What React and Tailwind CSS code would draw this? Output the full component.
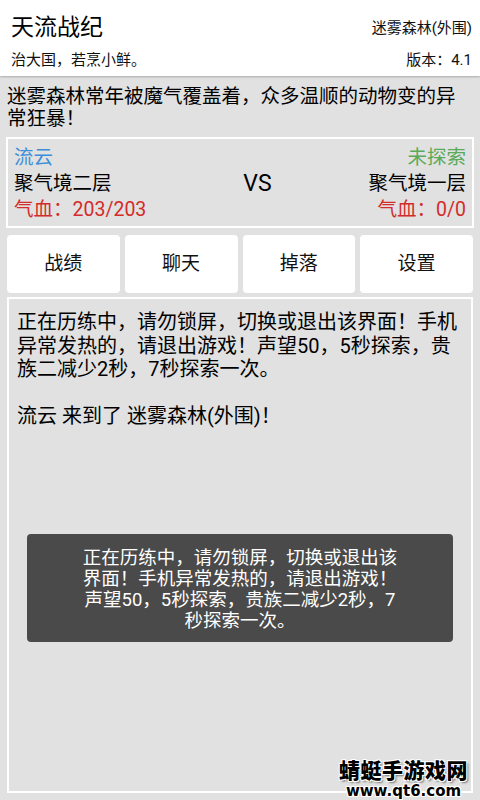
import React from "react";

// Game exploration screen – header, battle panel, tabs, log with toast

const FONT = "font-['Roboto','Noto_Sans_CJK_SC',sans-serif]";

function TabButton({ label }) {
  return (
    <button className="flex h-[58px] flex-1 items-center justify-center rounded-[4px] bg-white text-[19px] text-[#111]">
      {label}
    </button>
  );
}

export default function App() {
  const tabs = ["战绩", "聊天", "掉落", "设置"];

  return (
    <div className={`relative flex h-[800px] w-[480px] flex-col overflow-hidden bg-[#e1e1e1] ${FONT}`}>
      {/* Header */}
      <div className="bg-white px-[11px] pb-[3px] pt-[9px] shadow-[0_1px_2px_rgba(0,0,0,0.25)]">
        <div className="flex items-center justify-between">
          <span className="text-[23px] leading-[38px] text-[#000]">天流战纪</span>
          <span className="mr-[-3px] text-[15px] leading-[38px] text-[#111]">迷雾森林(外围)</span>
        </div>
        <div className="flex items-center justify-between">
          <span className="text-[15px] leading-[26px] text-[#111]">治大国，若烹小鲜。</span>
          <span className="mr-[-3px] text-[15px] leading-[26px] text-[#111]">版本：4.1</span>
        </div>
      </div>

      {/* Description */}
      <p className="px-[7px] pt-[10px] text-[19.5px] leading-[22px] text-[#000]">
        迷雾森林常年被魔气覆盖着，众多温顺的动物变的异常狂暴！
      </p>

      {/* Battle panel */}
      <div className="mx-[6px] mt-[7px] flex items-center justify-between border-2 border-white px-[6px] pb-[3px] pt-[6px]">
        <div className="flex flex-col">
          <span className="text-[19.5px] leading-[26px] text-[#3d8fd8]">流云</span>
          <span className="text-[19.5px] leading-[26px] text-[#000]">聚气境二层</span>
          <span className="text-[19.5px] leading-[26px] text-[#d42b2b]">气血：203/203</span>
        </div>
        <span className="text-[23px] text-[#000]">VS</span>
        <div className="flex flex-col items-end">
          <span className="text-[19.5px] leading-[26px] text-[#5aaa5a]">未探索</span>
          <span className="text-[19.5px] leading-[26px] text-[#000]">聚气境一层</span>
          <span className="text-[19.5px] leading-[26px] text-[#d42b2b]">气血：0/0</span>
        </div>
      </div>

      {/* Tabs */}
      <div className="mx-[7px] mt-[7px] flex gap-[5px]">
        {tabs.map((t) => (
          <TabButton key={t} label={t} />
        ))}
      </div>

      {/* Log panel */}
      <div className="relative mx-[7px] mb-[7px] mt-[4px] flex-1 border-2 border-white pb-[12px] pl-[8px] pr-[12px] pt-[12px]">
        <p className="text-[20px] leading-[23.5px] text-[#000]">
          正在历练中，请勿锁屏，切换或退出该界面！手机异常发热的，请退出游戏！声望50，5秒探索，贵族二减少2秒，7秒探索一次。
        </p>
        <p className="mt-[23.5px] text-[20px] leading-[23.5px] text-[#000]">流云 来到了 迷雾森林(外围)！</p>

        {/* Toast */}
        <div className="absolute left-[18px] right-[18px] top-[235px] flex justify-center rounded-[4px] bg-[#4a4a4a] pb-[10px] pt-[14px]">
          <p className="text-center text-[18.5px] leading-[21px] text-white">
            正在历练中，请勿锁屏，切换或退出该
            <br />
            界面！手机异常发热的，请退出游戏！
            <br />
            声望50，5秒探索，贵族二减少2秒，7
            <br />
            秒探索一次。
          </p>
        </div>
      </div>

      {/* Watermark */}
      <div className="absolute bottom-[1px] right-[12px] flex flex-col items-center">
        <span className="text-[21px] font-black leading-[24px] tracking-[0.5px] text-black [text-shadow:1px_1px_0_#fff,-1px_-1px_0_#fff,1px_-1px_0_#fff,-1px_1px_0_#fff,2px_2px_2px_#777]">
          蜻蜓手游戏网
        </span>
        <span className="font-['DejaVu_Sans',sans-serif] text-[15px] font-bold leading-[16px] text-black [text-shadow:1px_1px_0_#fff,-1px_-1px_0_#fff,1px_-1px_0_#fff,-1px_1px_0_#fff]">
          www.qt6.com
        </span>
      </div>
    </div>
  );
}
